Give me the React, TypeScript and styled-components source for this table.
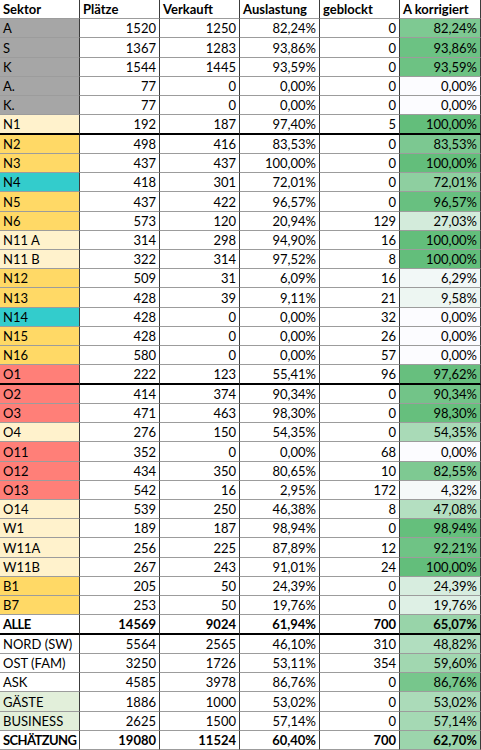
import styled, { createGlobalStyle } from "styled-components";

const GlobalStyle = createGlobalStyle`
  html, body {
    margin: 0;
    padding: 0;
    background: #ffffff;
  }
  body {
    font-family: Lato, "Liberation Sans", sans-serif;
  }
`;

type Tone = "gray" | "cream" | "gold" | "teal" | "coral" | "mint" | "none";

const TONES: Record<Tone, string> = {
  gray: "#a6a6a6",
  cream: "#fff2cc",
  gold: "#ffd966",
  teal: "#33cccc",
  coral: "#ff7f78",
  mint: "#e2efda",
  none: "#ffffff",
};

type Row = {
  sektor: string;
  plaetze: number;
  verkauft: number;
  auslastung: string;
  geblockt: number;
  korrigiert: string;
  tone?: Tone;
  bold?: boolean;
  thick?: boolean;
};

const rows: Row[] = [
  { sektor: "A", plaetze: 1520, verkauft: 1250, auslastung: "82,24%", geblockt: 0, korrigiert: "82,24%", tone: "gray" },
  { sektor: "S", plaetze: 1367, verkauft: 1283, auslastung: "93,86%", geblockt: 0, korrigiert: "93,86%", tone: "gray" },
  { sektor: "K", plaetze: 1544, verkauft: 1445, auslastung: "93,59%", geblockt: 0, korrigiert: "93,59%", tone: "gray" },
  { sektor: "A.", plaetze: 77, verkauft: 0, auslastung: "0,00%", geblockt: 0, korrigiert: "0,00%", tone: "gray" },
  { sektor: "K.", plaetze: 77, verkauft: 0, auslastung: "0,00%", geblockt: 0, korrigiert: "0,00%", tone: "gray" },
  { sektor: "N1", plaetze: 192, verkauft: 187, auslastung: "97,40%", geblockt: 5, korrigiert: "100,00%", tone: "cream", thick: true },
  { sektor: "N2", plaetze: 498, verkauft: 416, auslastung: "83,53%", geblockt: 0, korrigiert: "83,53%", tone: "gold" },
  { sektor: "N3", plaetze: 437, verkauft: 437, auslastung: "100,00%", geblockt: 0, korrigiert: "100,00%", tone: "gold" },
  { sektor: "N4", plaetze: 418, verkauft: 301, auslastung: "72,01%", geblockt: 0, korrigiert: "72,01%", tone: "teal" },
  { sektor: "N5", plaetze: 437, verkauft: 422, auslastung: "96,57%", geblockt: 0, korrigiert: "96,57%", tone: "gold" },
  { sektor: "N6", plaetze: 573, verkauft: 120, auslastung: "20,94%", geblockt: 129, korrigiert: "27,03%", tone: "gold" },
  { sektor: "N11 A", plaetze: 314, verkauft: 298, auslastung: "94,90%", geblockt: 16, korrigiert: "100,00%", tone: "cream" },
  { sektor: "N11 B", plaetze: 322, verkauft: 314, auslastung: "97,52%", geblockt: 8, korrigiert: "100,00%", tone: "cream" },
  { sektor: "N12", plaetze: 509, verkauft: 31, auslastung: "6,09%", geblockt: 16, korrigiert: "6,29%", tone: "gold" },
  { sektor: "N13", plaetze: 428, verkauft: 39, auslastung: "9,11%", geblockt: 21, korrigiert: "9,58%", tone: "gold" },
  { sektor: "N14", plaetze: 428, verkauft: 0, auslastung: "0,00%", geblockt: 32, korrigiert: "0,00%", tone: "teal" },
  { sektor: "N15", plaetze: 428, verkauft: 0, auslastung: "0,00%", geblockt: 26, korrigiert: "0,00%", tone: "gold" },
  { sektor: "N16", plaetze: 580, verkauft: 0, auslastung: "0,00%", geblockt: 57, korrigiert: "0,00%", tone: "gold" },
  { sektor: "O1", plaetze: 222, verkauft: 123, auslastung: "55,41%", geblockt: 96, korrigiert: "97,62%", tone: "coral", thick: true },
  { sektor: "O2", plaetze: 414, verkauft: 374, auslastung: "90,34%", geblockt: 0, korrigiert: "90,34%", tone: "coral" },
  { sektor: "O3", plaetze: 471, verkauft: 463, auslastung: "98,30%", geblockt: 0, korrigiert: "98,30%", tone: "coral" },
  { sektor: "O4", plaetze: 276, verkauft: 150, auslastung: "54,35%", geblockt: 0, korrigiert: "54,35%", tone: "cream" },
  { sektor: "O11", plaetze: 352, verkauft: 0, auslastung: "0,00%", geblockt: 68, korrigiert: "0,00%", tone: "coral" },
  { sektor: "O12", plaetze: 434, verkauft: 350, auslastung: "80,65%", geblockt: 10, korrigiert: "82,55%", tone: "coral" },
  { sektor: "O13", plaetze: 542, verkauft: 16, auslastung: "2,95%", geblockt: 172, korrigiert: "4,32%", tone: "coral" },
  { sektor: "O14", plaetze: 539, verkauft: 250, auslastung: "46,38%", geblockt: 8, korrigiert: "47,08%", tone: "cream" },
  { sektor: "W1", plaetze: 189, verkauft: 187, auslastung: "98,94%", geblockt: 0, korrigiert: "98,94%", tone: "cream" },
  { sektor: "W11A", plaetze: 256, verkauft: 225, auslastung: "87,89%", geblockt: 12, korrigiert: "92,21%", tone: "cream" },
  { sektor: "W11B", plaetze: 267, verkauft: 243, auslastung: "91,01%", geblockt: 24, korrigiert: "100,00%", tone: "cream" },
  { sektor: "B1", plaetze: 205, verkauft: 50, auslastung: "24,39%", geblockt: 0, korrigiert: "24,39%", tone: "gold" },
  { sektor: "B7", plaetze: 253, verkauft: 50, auslastung: "19,76%", geblockt: 0, korrigiert: "19,76%", tone: "gold" },
  { sektor: "ALLE", plaetze: 14569, verkauft: 9024, auslastung: "61,94%", geblockt: 700, korrigiert: "65,07%", bold: true, thick: true },
  { sektor: "NORD (SW)", plaetze: 5564, verkauft: 2565, auslastung: "46,10%", geblockt: 310, korrigiert: "48,82%" },
  { sektor: "OST (FAM)", plaetze: 3250, verkauft: 1726, auslastung: "53,11%", geblockt: 354, korrigiert: "59,60%" },
  { sektor: "ASK", plaetze: 4585, verkauft: 3978, auslastung: "86,76%", geblockt: 0, korrigiert: "86,76%" },
  { sektor: "GÄSTE", plaetze: 1886, verkauft: 1000, auslastung: "53,02%", geblockt: 0, korrigiert: "53,02%", tone: "mint" },
  { sektor: "BUSINESS", plaetze: 2625, verkauft: 1500, auslastung: "57,14%", geblockt: 0, korrigiert: "57,14%", tone: "mint" },
  { sektor: "SCHÄTZUNG", plaetze: 19080, verkauft: 11524, auslastung: "60,40%", geblockt: 700, korrigiert: "62,70%", bold: true },
];

// Excel style two colour scale: white -> green, 0..100 %
const scaleGreen = (pct: string) => {
  const v = Math.min(100, parseFloat(pct.replace(",", "."))) / 100;
  const from = [252, 252, 255];
  const to = [99, 190, 123];
  const c = from.map((f, i) => Math.round(f + (to[i] - f) * v));
  return `rgb(${c[0]}, ${c[1]}, ${c[2]})`;
};

const Sheet = styled.div`
  display: grid;
  grid-template-columns: 80px 80px 80px 80px 80px 81px;
  grid-template-rows: repeat(39, 1fr);
  width: 481px;
  height: 750px;
  font-size: 13px;
  color: #000;
`;

const Cell = styled.div<{ $right?: boolean; $bold?: boolean; $bg?: string; $thick?: boolean }>`
  box-sizing: border-box;
  display: flex;
  align-items: flex-end;
  justify-content: ${(p) => (p.$right ? "flex-end" : "flex-start")};
  padding: 0 3px 1px 3px;
  background: ${(p) => p.$bg ?? "#ffffff"};
  font-weight: ${(p) => (p.$bold ? 700 : 400)};
  border-right: 1px solid #3c3c3c;
  border-bottom: ${(p) => (p.$thick ? "2px solid #000" : "1px solid #9c9c9c")};
  white-space: nowrap;
  overflow: hidden;
  line-height: 16px;
`;

// bold labels in the first column are set tighter so SCHÄTZUNG fits
const LabelCell = styled(Cell)`
  letter-spacing: ${(p) => (p.$bold ? "-0.6px" : "0")};
`;

const HeadCell = styled(Cell)`
  font-weight: 700;
`;

const headers = ["Sektor", "Plätze", "Verkauft", "Auslastung", "geblockt", "A korrigiert"];

export default function App() {
  return (
    <>
      <GlobalStyle />
      <Sheet>
        {headers.map((h) => (
          <HeadCell key={h}>{h}</HeadCell>
        ))}
        {rows.map((r) => (
          <RowCells key={r.sektor} row={r} />
        ))}
      </Sheet>
    </>
  );
}

function RowCells({ row }: { row: Row }) {
  const { bold, thick } = row;
  return (
    <>
      <LabelCell $bold={bold} $thick={thick} $bg={TONES[row.tone ?? "none"]}>
        {row.sektor}
      </LabelCell>
      <Cell $right $bold={bold} $thick={thick}>{row.plaetze}</Cell>
      <Cell $right $bold={bold} $thick={thick}>{row.verkauft}</Cell>
      <Cell $right $bold={bold} $thick={thick}>{row.auslastung}</Cell>
      <Cell $right $bold={bold} $thick={thick}>{row.geblockt}</Cell>
      <Cell $right $bold={bold} $thick={thick} $bg={scaleGreen(row.korrigiert)}>
        {row.korrigiert}
      </Cell>
    </>
  );
}
